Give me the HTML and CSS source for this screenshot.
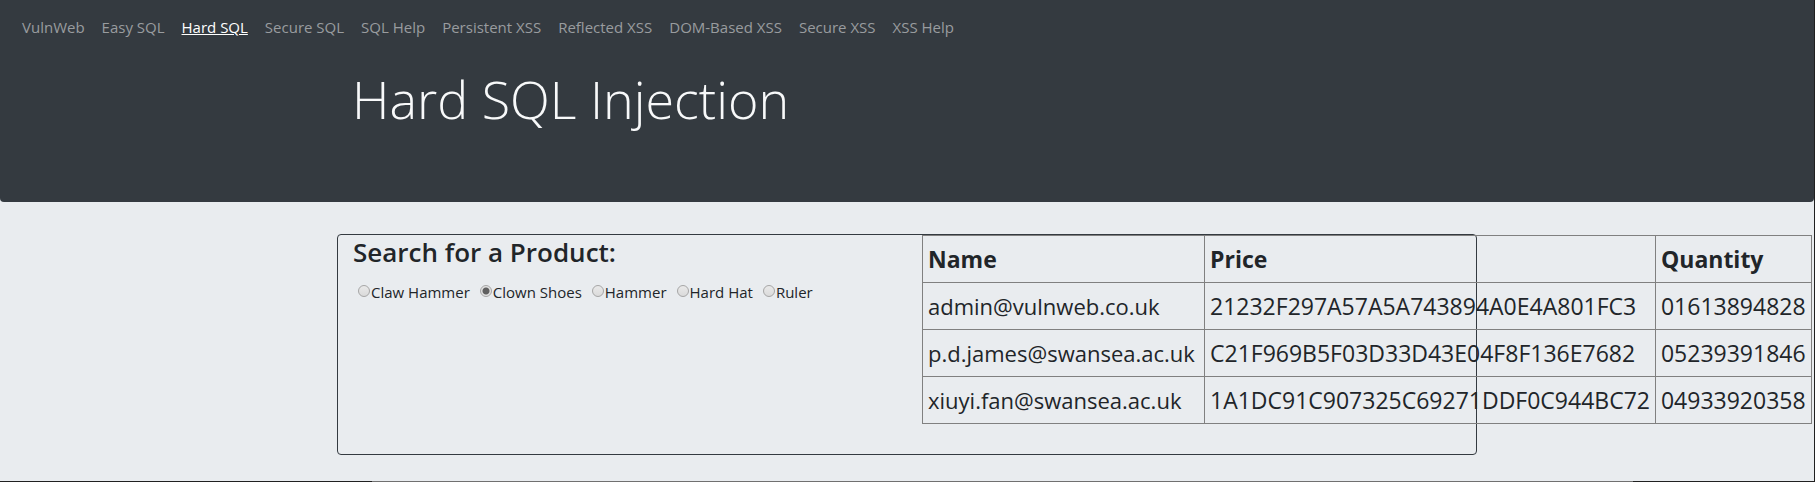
FILE: index.html
```html
<!DOCTYPE html>
<html lang="en">
<head>
<meta charset="utf-8">
<title>Hard SQL Injection</title>
<link rel="stylesheet" href="styles.css">
</head>
<body>
<header class="banner">
  <nav class="nav">
    <a class="nav-link" href="#">VulnWeb</a>
    <a class="nav-link" href="#">Easy SQL</a>
    <a class="nav-link active" href="#">Hard SQL</a>
    <a class="nav-link" href="#">Secure SQL</a>
    <a class="nav-link" href="#">SQL Help</a>
    <a class="nav-link" href="#">Persistent XSS</a>
    <a class="nav-link" href="#">Reflected XSS</a>
    <a class="nav-link" href="#">DOM-Based XSS</a>
    <a class="nav-link" href="#">Secure XSS</a>
    <a class="nav-link" href="#">XSS Help</a>
  </nav>
  <div class="container">
    <h1 class="title">Hard SQL Injection</h1>
  </div>
</header>
<main class="content">
  <div class="container panel">
    <form class="search">
      <h2 class="search-title">Search for a Product:</h2>
      <div class="options">
        <label class="option"><input class="radio" type="radio" name="product">Claw Hammer</label>
        <label class="option"><input class="radio" type="radio" name="product" checked>Clown Shoes</label>
        <label class="option"><input class="radio" type="radio" name="product">Hammer</label>
        <label class="option"><input class="radio" type="radio" name="product">Hard Hat</label>
        <label class="option"><input class="radio" type="radio" name="product">Ruler</label>
      </div>
    </form>
    <div class="results">
      <table class="table">
        <thead>
          <tr><th>Name</th><th>Price</th><th>Quantity</th></tr>
        </thead>
        <tbody>
          <tr><td class="name">admin@vulnweb.co.uk</td><td>21232F297A57A5A743894A0E4A801FC3</td><td>01613894828</td></tr>
          <tr><td class="name">p.d.james@swansea.ac.uk</td><td>C21F969B5F03D33D43E04F8F136E7682</td><td>05239391846</td></tr>
          <tr><td class="name">xiuyi.fan@swansea.ac.uk</td><td>1A1DC91C907325C69271DDF0C944BC72</td><td>04933920358</td></tr>
        </tbody>
      </table>
    </div>
  </div>
</main>
<footer class="edge"></footer>
</body>
</html>
```
FILE: styles.css
```css
* { box-sizing: border-box; }

body {
  margin: 0;
  min-height: 100vh;
  display: flex;
  flex-direction: column;
  overflow-x: hidden;
  border-right: 1px solid #202020;
  background: #e9ecef;
  color: #212529;
  font-family: "Segoe UI", "Open Sans", sans-serif;
  font-size: 15px;
  line-height: 24px;
}

.banner {
  padding-bottom: 64px;
  border-radius: 0 0 4px 4px;
  background: #343a40;
  color: #f8f9fa;
}

.nav {
  display: flex;
  gap: 1px;
  padding: 7px 14px 9px;
}

.nav-link {
  padding: 8px;
  color: #999c9f;
  text-decoration: none;
  white-space: nowrap;
}

.nav-link.active {
  color: #fff;
  text-decoration: underline;
}

.container {
  width: 100%;
  max-width: 1140px;
  margin: 0 auto;
}

.title {
  margin: 0;
  padding: 10px 15px 6px;
  font-size: 52px;
  font-weight: 300;
  line-height: 66px;
}

.content {
  flex: 1;
  padding: 32px 0 26px;
}

.panel {
  display: grid;
  grid-template-columns: 1fr 1fr;
  min-height: 221px;
  border: 1px solid #343a40;
  border-radius: 4px;
}

.search,
.results {
  min-width: 0;
  padding: 0 15px;
}

.search-title {
  margin: 0 0 11px;
  font-size: 26px;
  font-weight: 600;
  line-height: 34px;
}

.options {
  display: flex;
  gap: 10px;
  padding-left: 5px;
}

.option {
  display: flex;
  align-items: center;
  gap: 1px;
  white-space: nowrap;
}

.radio {
  appearance: none;
  width: 12px;
  height: 12px;
  margin: 0 0 3px;
  border: 1px solid #a6a6a6;
  border-radius: 50%;
  background: linear-gradient(#e9e9e9, #dadada);
}

.radio:checked {
  background: radial-gradient(circle, #606060 3px, #e2e2e2 4px);
}

.table {
  border-collapse: collapse;
  font-size: 23px;
  line-height: 36px;
  white-space: nowrap;
}

.table th,
.table td {
  padding: 5px;
  border: 1px solid #808080;
  text-align: left;
}

.table .name {
  min-width: 282px;
  font-size: 22px;
}

.edge {
  height: 1px;
  background: linear-gradient(90deg, #202020 372px, #707070 372px, #707070 90%, #202020 90%);
}
```
